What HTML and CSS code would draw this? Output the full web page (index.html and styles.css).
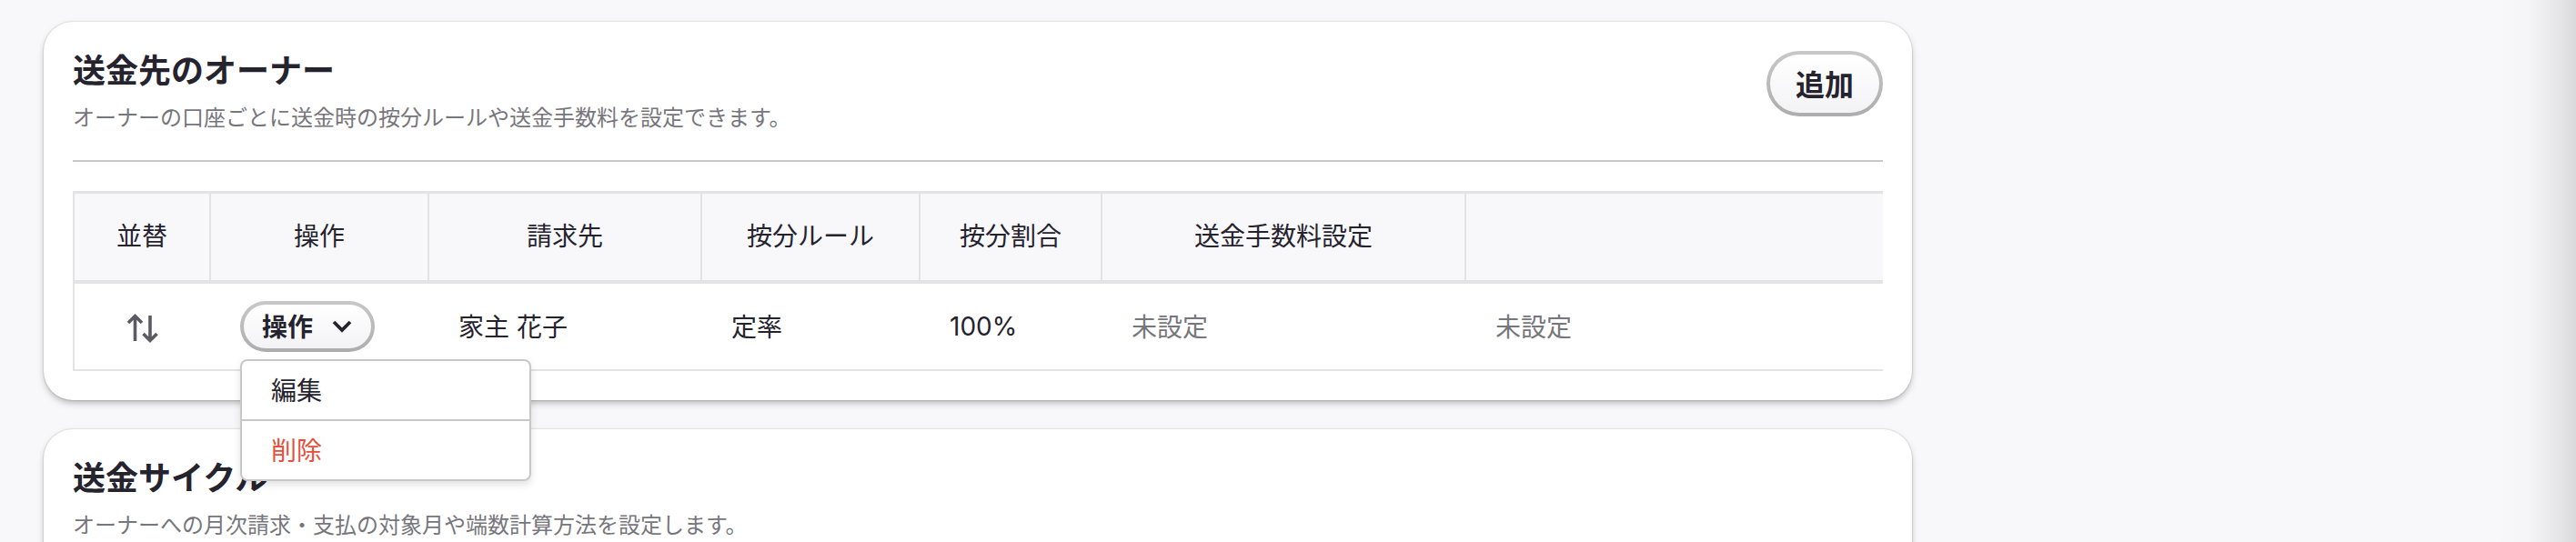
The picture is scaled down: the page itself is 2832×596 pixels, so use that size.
FILE: index.html
```html
<!DOCTYPE html>
<html lang="ja">
<head>
<meta charset="utf-8">
<title>送金先のオーナー</title>
<link rel="stylesheet" href="styles.css">
</head>
<body>
<main class="page">
  <section class="card">
    <header class="card-header">
      <div class="heading">
        <h2 class="title">送金先のオーナー</h2>
        <p class="description">オーナーの口座ごとに送金時の按分ルールや送金手数料を設定できます。</p>
      </div>
      <button class="button button-add" type="button">追加</button>
    </header>
    <div class="table">
      <div class="row head">
        <div class="cell">並替</div>
        <div class="cell">操作</div>
        <div class="cell">請求先</div>
        <div class="cell">按分ルール</div>
        <div class="cell">按分割合</div>
        <div class="cell">送金手数料設定</div>
        <div class="cell"></div>
      </div>
      <div class="row body">
        <div class="cell sort">
          <svg class="sort-icon" width="36" height="36" viewBox="0 0 36 36" aria-hidden="true">
            <path d="M10.500 32V5M3 12l7.500-7.500L18 12M27 4v27M19.500 24L27 31.500l7.500-7.500"/>
          </svg>
        </div>
        <div class="cell action">
          <button class="button button-menu" type="button">操作
            <svg class="chevron" width="24" height="16" viewBox="0 0 24 16" aria-hidden="true">
              <path d="M3 3l9 9 9-9"/>
            </svg>
          </button>
          <div class="menu">
            <div class="menu-item">編集</div>
            <div class="menu-item danger">削除</div>
          </div>
        </div>
        <div class="cell">家主 花子</div>
        <div class="cell">定率</div>
        <div class="cell number">100%</div>
        <div class="cell muted">未設定</div>
        <div class="cell muted">未設定</div>
      </div>
    </div>
  </section>
  <section class="card card-cycle">
    <div class="heading">
      <h2 class="title">送金サイクル</h2>
      <p class="description">オーナーへの月次請求・支払の対象月や端数計算方法を設定します。</p>
    </div>
  </section>
  <div class="edge-shade"></div>
</main>
</body>
</html>
```

FILE: styles.css
```css
* {
  box-sizing: border-box;
}

body {
  margin: 0;
  background: #f8f8fb;
  color: #25232e;
  font-family: Inter, "Noto Sans CJK JP", sans-serif;
  font-size: 28px;
}

.page {
  position: relative;
  display: flex;
  flex-direction: column;
  gap: 32px;
  height: 596px;
  padding: 24px 0 0 48px;
  overflow: hidden;
}

.card {
  flex: none;
  width: 2054px;
  height: 416px;
  padding: 32px;
  border-radius: 32px;
  background: #fff;
  box-shadow: 0 0 2px rgba(0, 0, 0, 0.24), 0 4px 8px -2px rgba(0, 0, 0, 0.34);
}

.card-header {
  display: flex;
  justify-content: space-between;
  align-items: flex-start;
  height: 122px;
  margin-bottom: 32px;
  border-bottom: 2px solid #c8c8c8;
}

.heading {
  padding-top: 2px;
}

.title {
  margin: 0;
  font-size: 36px;
  font-weight: 700;
  line-height: 40px;
}

.description {
  margin: 14px 0 0;
  color: #77767c;
  font-size: 24px;
  line-height: 36px;
}

.button {
  display: flex;
  justify-content: center;
  align-items: center;
  border: 4px solid transparent;
  background:
    linear-gradient(#fff, #f3f3f6) padding-box,
    linear-gradient(#c8c8c8, #adadae) border-box;
  color: #25232e;
  font-family: inherit;
  font-weight: 700;
}

.button-add {
  width: 128px;
  height: 72px;
  padding: 0 0 3px;
  border-radius: 36px;
  font-size: 32px;
}

.button-menu {
  gap: 20px;
  width: 148px;
  height: 56px;
  padding: 0 4px 2px;
  border-radius: 28px;
  font-size: 28px;
}

.sort-icon,
.chevron {
  flex: none;
  fill: none;
  stroke: #5b5a63;
  stroke-width: 3.6;
}

.chevron {
  margin-top: 2px;
  stroke: #25232e;
  stroke-width: 3.8;
}

.table {
  border-left: 2px solid #e3e3e3;
}

.row {
  display: grid;
  grid-template-columns: 150px 240px 300px 240px 200px 400px 1fr;
}

.head {
  height: 102px;
  border-top: 3px solid #e3e3e3;
  border-bottom: 4px solid #e3e3e3;
  background: #f8f8fb;
}

.head .cell {
  display: flex;
  justify-content: center;
  align-items: center;
  padding-bottom: 5px;
  border-right: 2px solid #e3e3e3;
}

.head .cell:last-child {
  border-right: 0;
}

.body {
  height: 96px;
  border-bottom: 2px solid #e3e3e3;
}

.body .cell {
  display: flex;
  align-items: center;
  padding: 0 32px 3px;
}

.body .sort {
  justify-content: center;
  padding: 4px 2px 0 0;
}

.body .action {
  position: relative;
  padding-bottom: 0;
}

.body .number {
  padding-bottom: 0;
}

.muted {
  color: #77767c;
}

/* The menu opens over the table and the next card. */
.menu {
  position: absolute;
  top: 83px;
  left: 32px;
  z-index: 2;
  width: 320px;
  border: 2px solid #c8c8c8;
  border-radius: 8px;
  background: #fff;
  box-shadow: 0 4px 8px rgba(0, 0, 0, 0.12);
}

.menu-item {
  display: flex;
  align-items: center;
  height: 64px;
  padding: 0 32px 3px;
}

.danger {
  height: 66px;
  border-top: 2px solid #c8c8c8;
  color: #e54f3c;
}

.edge-shade {
  position: absolute;
  top: 0;
  right: 0;
  bottom: 0;
  width: 88px;
  background: linear-gradient(to right, rgba(0, 0, 0, 0), rgba(0, 0, 0, 0.013) 41%, rgba(0, 0, 0, 0.05) 64%, rgba(0, 0, 0, 0.083) 82%, rgba(0, 0, 0, 0.12));
}
```
